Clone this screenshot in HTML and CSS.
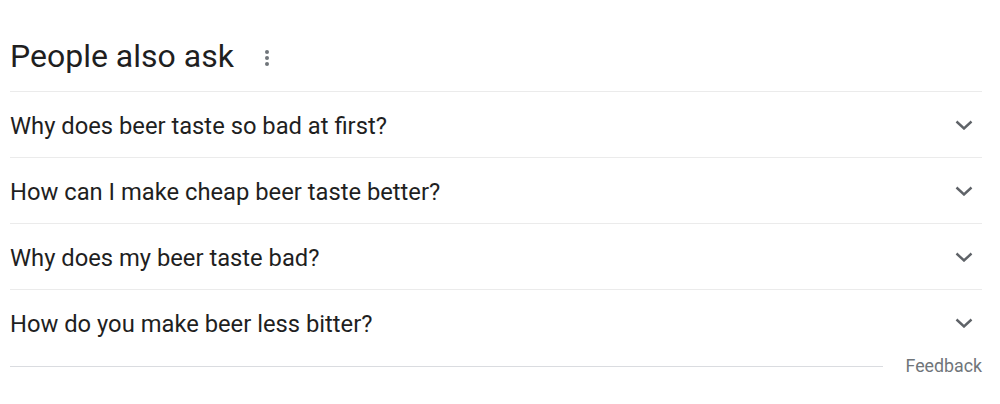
FILE: index.html
```html
<!DOCTYPE html>
<html>
<head>
<meta charset="utf-8">
<link rel="stylesheet" href="styles.css">
</head>
<body>
<div class="paa">
  <div class="head">
    <h2 class="title">People also ask</h2>
    <svg class="more" width="6" height="18" viewBox="0 0 6 18"><circle cx="3" cy="3" r="2" fill="#70757a"/><circle cx="3" cy="9" r="2" fill="#70757a"/><circle cx="3" cy="15" r="2" fill="#70757a"/></svg>
  </div>
  <div class="list">
    <div class="row"><span class="q">Why does beer taste so bad at first?</span><svg class="chev" width="18" height="10" viewBox="0 0 18 10"><path d="M1.5 1.5 L9 8.5 L16.5 1.5" fill="none" stroke="#5f6368" stroke-width="2.4"/></svg></div>
    <div class="row"><span class="q">How can I make cheap beer taste better?</span><svg class="chev" width="18" height="10" viewBox="0 0 18 10"><path d="M1.5 1.5 L9 8.5 L16.5 1.5" fill="none" stroke="#5f6368" stroke-width="2.4"/></svg></div>
    <div class="row"><span class="q">Why does my beer taste bad?</span><svg class="chev" width="18" height="10" viewBox="0 0 18 10"><path d="M1.5 1.5 L9 8.5 L16.5 1.5" fill="none" stroke="#5f6368" stroke-width="2.4"/></svg></div>
    <div class="row"><span class="q">How do you make beer less bitter?</span><svg class="chev" width="18" height="10" viewBox="0 0 18 10"><path d="M1.5 1.5 L9 8.5 L16.5 1.5" fill="none" stroke="#5f6368" stroke-width="2.4"/></svg></div>
  </div>
  <div class="foot">
    <div class="rule"></div>
    <span class="feedback">Feedback</span>
  </div>
</div>
</body>
</html>
```
FILE: styles.css
```css
html, body { margin: 0; padding: 0; background: #fff; }
body { font-family: Roboto, "Liberation Sans", Arial, sans-serif; color: #1f1f1f; }
.paa { padding: 0 18px 0 10px; }
.head { display: flex; align-items: flex-start; height: 91px; padding-top: 37px; box-sizing: border-box; }
.title { margin: 0; font-size: 32px; line-height: 38px; font-weight: 400; color: #1f1f1f; }
.more { margin-left: 30px; margin-top: 12px; }
.list { border-top: 1px solid #ebebeb; }
.row { display: flex; align-items: center; justify-content: space-between; height: 65px; border-bottom: 1px solid #ebebeb; }
.row:last-child { border-bottom: none; }
.q { font-size: 23.75px; line-height: 28px; padding-top: 3px; }
.chev { margin-right: 9px; margin-top: 1px; }
.foot { display: flex; align-items: center; height: 23px; }
.rule { flex: 1; border-top: 1px solid #dadce0; margin-right: 22px; }
.feedback { font-size: 17.8px; line-height: 20px; color: #70757a; padding-bottom: 2px; }
```
